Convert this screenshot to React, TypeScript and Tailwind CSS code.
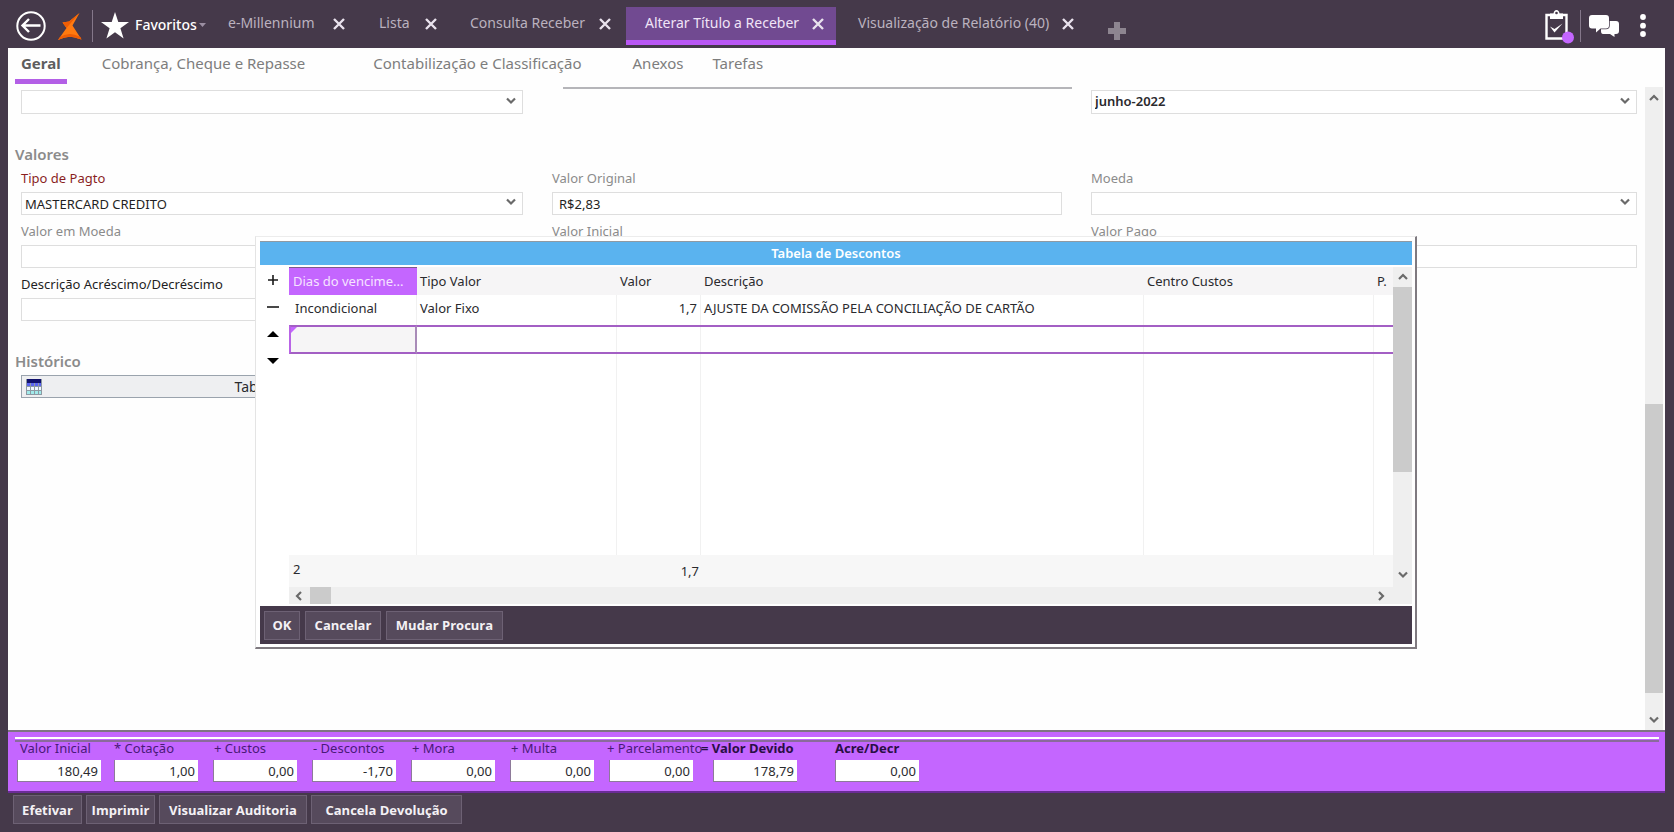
import React from "react";

type Option = { id: string; label: string; value?: string; tone?: string };

function Chevron({ dir = "down" }: { dir?: "down" | "up" | "left" | "right" }) {
  const paths = {
    down: "M2 3.5 6 7.5 10 3.5",
    up: "M2 8 6 4 10 8",
    left: "M8 2 4 6 8 10",
    right: "M4 2 8 6 4 10",
  };
  return (
    <svg viewBox="0 0 12 12" className="size-3" fill="none" stroke="#6a6a6a" strokeWidth="2.2" aria-hidden="true">
      <path d={paths[dir]} />
    </svg>
  );
}

function CloseIcon() {
  return (
    <svg viewBox="0 0 12 12" className="size-3" fill="none" stroke="#e9e2ed" strokeWidth="2.4" aria-hidden="true">
      <path d="M1 1 11 11M11 1 1 11" />
    </svg>
  );
}

function SelectField({ id, label, value, tone = "text-[#8b8b8b]" }: Option) {
  return (
    <div className="flex flex-col">
      <label htmlFor={id} className={`h-[22px] text-[13px] leading-4 ${tone}`}>
        {label}
      </label>
      <div className="relative">
        <select
          id={id}
          defaultValue={value}
          className="block h-[23px] w-full appearance-none border border-[#dedede] bg-white pl-[3px] text-[13px] leading-5 text-[#1f1f24]"
        >
          <option>{value}</option>
        </select>
        <span className="pointer-events-none absolute top-1 right-1.5">
          <Chevron />
        </span>
      </div>
    </div>
  );
}

function TextField({ id, label, value, tone = "text-[#8b8b8b]" }: Option) {
  return (
    <div className="flex flex-col">
      <label htmlFor={id} className={`h-[22px] text-[13px] leading-4 ${tone}`}>
        {label}
      </label>
      <input
        id={id}
        defaultValue={value}
        className="h-[23px] w-full border border-[#dedede] bg-white px-1.5 text-[13px] leading-5 text-[#1f1f24]"
      />
    </div>
  );
}

const windowTabs = [
  { label: "e-Millennium", box: "w-[150px] pr-4 pl-[17px]" },
  { label: "Lista", box: "w-[92px] pr-4 pl-[18px]" },
  { label: "Consulta Receber", box: "w-[173px] pr-[15px] pl-[17px]" },
  { label: "Alterar Título a Receber", box: "w-[210px] pr-3 pl-[19px]", active: true },
  { label: "Visualização de Relatório (40)", box: "w-[250px] pr-3 pl-[22px]" },
];

function Header() {
  return (
    <header className="flex h-12 items-start bg-[#45394a] pl-4 text-white">
      <button aria-label="Voltar" className="mt-[11px]">
        <svg viewBox="0 0 30 30" className="size-[30px]" fill="none" stroke="#fff" strokeWidth="2">
          <circle cx="15" cy="15" r="13.7" />
          <path d="M24.500 14.500H6.500M13 8 6.500 14.500 13 21" strokeWidth="2.400" />
        </svg>
      </button>
      <svg viewBox="0 0 24 28" className="mt-[13px] ml-3 h-7 w-6" aria-hidden="true">
        <path d="M21.500 0 14.500 12.500 23.500 26.500Q16 24 11.500 23.700 6 24 0 27L8.500 15 4.500 9.500 11 8.500Z" fill="#ff7a0f" />
        <path d="M8.500 15 4.500 9.500 11 8.500 21.500 0Z" fill="#ee5d05" />
        <path d="M0 27Q6 24 11.500 23.700 16 24 23.500 26.500L22.500 24Q16 21 11.500 21 6 21.500 2 24Z" fill="#ee5d05" />
      </svg>
      <span className="mt-2.5 ml-2.5 h-8 w-px bg-[#84778a]" />
      <button className="mt-[11px] ml-2 flex h-7 w-[104px] items-center text-[14px] font-medium">
        <svg viewBox="0 0 28 27" className="h-[27px] w-7 shrink-0" aria-hidden="true">
          <path d="M14 0 17.300 10H28L19.400 16.200 22.600 26.500 14 20.200 5.400 26.500 8.600 16.200 0 10H10.700Z" fill="#fff" />
        </svg>
        <span className="ml-1.5 leading-5">Favoritos</span>
        <svg viewBox="0 0 8 4" className="ml-0.5 h-1 w-2 shrink-0" aria-hidden="true">
          <path d="M0 0H7L3.500 4Z" fill="#9b8fa2" />
        </svg>
      </button>
      <nav className="ml-1.5 flex pt-[7px]" aria-label="Janelas">
        {windowTabs.map((t) => (
          <div
            key={t.label}
            className={`flex h-[38px] items-start justify-between text-[14px] leading-5 ${t.box} ${
              t.active ? "border-b-[5px] border-[#b957f5] bg-[#714a91] text-[#f0e4f7]" : "text-[#bbb2bf]"
            }`}
          >
            <a href="#" className="mt-1.5 whitespace-nowrap">
              {t.label}
            </a>
            <button aria-label={`Fechar ${t.label}`} className="mt-[11px]">
              <CloseIcon />
            </button>
          </div>
        ))}
      </nav>
      <button aria-label="Adicionar" className="mt-[22px] ml-[22px]">
        <svg viewBox="0 0 18 18" className="size-[18px]" aria-hidden="true">
          <path d="M6 0H12V6H18V12H12V18H6V12H0V6H6Z" fill="#8d8590" />
        </svg>
      </button>
      <div className="ml-auto flex items-start pr-7">
        <button aria-label="Tarefas pendentes" className="mt-2.5">
          <svg viewBox="0 0 30 34" className="h-[34px] w-[30px]">
            <path d="M1.500 5H21.500V28.500H1.500Z" fill="none" stroke="#fff" strokeWidth="2.400" />
            <path d="M5 9V3.500H8.500Q9 0 11.500 0T14.500 3.500H18V9Z" fill="#fff" />
            <circle cx="11.500" cy="3" r="1.300" fill="#45394a" />
            <path d="M5 16.500 9.500 22.500 17.500 13.500 9.500 19Z" fill="#fff" />
            <circle cx="23" cy="27.500" r="6" fill="#c466ff" />
          </svg>
        </button>
        <span className="mt-2.5 ml-[5px] h-8 w-px bg-[#84778a]" />
        <button aria-label="Conversas" className="mt-[15px] ml-2">
          <svg viewBox="0 0 31 22" className="h-[22px] w-[31px]">
            <path d="M14 6H27Q30 6 30 9V16Q30 19 27 19H25.500V22L21 19H14Q12 19 12 16V8Z" fill="#fff" />
            <path
              d="M3 0H17Q20 0 20 3V10.500Q20 13.500 17 13.500H11.500L7 17.500V13.500H3Q0 13.500 0 10.500V3Q0 0 3 0Z"
              fill="#fff"
              stroke="#45394a"
              strokeWidth="1.500"
              paintOrder="stroke"
            />
          </svg>
        </button>
        <button aria-label="Mais opções" className="mt-[14px] ml-5">
          <svg viewBox="0 0 6 24" className="h-6 w-1.5" fill="#fff">
            <circle cx="3" cy="3" r="2.900" />
            <circle cx="3" cy="11.700" r="2.900" />
            <circle cx="3" cy="20" r="2.900" />
          </svg>
        </button>
      </div>
    </header>
  );
}

const sections = [
  { label: "Cobrança, Cheque e Repasse", gap: "ml-[35px]" },
  { label: "Contabilização e Classificação", gap: "ml-[68px]" },
  { label: "Anexos", gap: "ml-[51px]" },
  { label: "Tarefas", gap: "ml-[29px]" },
];

function SectionNav() {
  return (
    <nav className="flex h-9 items-start pl-[7px] text-[15px] text-[#7d7d7d]" aria-label="Seções">
      <a href="#" className="h-9 border-b-[5px] border-[#b35fe6] px-1.5 leading-[30px] font-bold text-[#5e5e5e]">
        Geral
      </a>
      {sections.map((s) => (
        <a key={s.label} href="#" className={`leading-[30px] whitespace-nowrap ${s.gap}`}>
          {s.label}
        </a>
      ))}
    </nav>
  );
}

const columns = ["Dias do vencime...", "Tipo Valor", "Valor", "Descrição", "Centro Custos", "P."];
const cellLine = "border-r border-[#f1f1f1]";

function DiscountTable() {
  return (
    <table className="w-full table-fixed border-separate border-spacing-0 text-[13px] leading-4 text-[#2a2a2e]">
      <colgroup>
        <col className="w-[128px]" />
        <col className="w-[200px]" />
        <col className="w-[84px]" />
        <col />
        <col className="w-[230px]" />
        <col className="w-[19px]" />
      </colgroup>
      <thead>
        <tr className="h-7 bg-[#f6f5f6] text-left">
          {columns.map((c, i) => (
            <th
              key={c}
              scope="col"
              className={`font-normal whitespace-nowrap ${
                i === 0
                  ? "border-y border-t-[#7b5a8c] border-b-[#c466ff] bg-[#c466ff] px-1 text-[#f6e4ff]"
                  : "px-[3px]"
              }`}
            >
              {c}
            </th>
          ))}
        </tr>
      </thead>
      <tbody>
        <tr className="h-[30px] align-top">
          <td className={`pt-[5px] pl-1.5 ${cellLine}`}>Incondicional</td>
          <td className={`pt-[5px] pl-[3px] ${cellLine}`}>Valor Fixo</td>
          <td className={`pt-[5px] pr-[3px] text-right ${cellLine}`}>1,7</td>
          <td className={`pt-[5px] pl-[3px] whitespace-nowrap ${cellLine}`}>
            AJUSTE DA COMISSÃO PELA CONCILIAÇÃO DE CARTÃO
          </td>
          <td className={cellLine} />
          <td />
        </tr>
        <tr className="h-[29px]">
          <td className="relative border-2 border-y-[#a35fc4] border-r-[#a98bb8] border-l-[#b964e6] bg-[#f6f5f6] p-0">
            <svg viewBox="0 0 6 6" className="absolute top-0 left-0 size-1.5" aria-hidden="true">
              <path d="M0 0H6L0 6Z" fill="#c466ff" />
            </svg>
          </td>
          {[0, 1, 2, 3, 4].map((i) => (
            <td key={i} className="border-y-2 border-[#a35fc4] p-0">
              <div className={`h-[25px] ${i < 4 ? cellLine : ""}`} />
            </td>
          ))}
        </tr>
        <tr className="h-[201px]">
          {[0, 1, 2, 3, 4].map((i) => (
            <td key={i} className={cellLine} />
          ))}
          <td />
        </tr>
      </tbody>
      <tfoot>
        <tr className="h-8 bg-[#f7f7f7]">
          <td className="pb-1 pl-1">2</td>
          <td />
          <td className="pr-0.5 text-right">1,7</td>
          <td colSpan={3} />
        </tr>
      </tfoot>
    </table>
  );
}

const darkButton =
  "border border-[#6d6174] bg-[#564a5c] font-bold text-[#f4f1f5] whitespace-nowrap text-[13px] leading-4 font-['Open_Sans','Noto_Sans',sans-serif]";

function DiscountDialog() {
  return (
    <section
      role="dialog"
      aria-label="Tabela de Descontos"
      className="absolute top-[188px] right-[248px] left-[247px] border-t border-r-2 border-b-2 border-l border-t-[#ececec] border-r-[#7f7a80] border-b-[#7f7a80] border-l-[#e4e4e4] bg-white pt-1 pr-[3px] pb-[3px] pl-1"
    >
      <h2 className="h-6 border-t border-[#8f9aa3] bg-[#5ab3ef] text-center text-[13px] leading-[22px] font-semibold text-white">
        Tabela de Descontos
      </h2>
      <div className="flex pt-0.5 pb-0.5">
        <div className="flex w-[29px] flex-col items-center gap-[11px] pt-[5px] pr-1">
          <button aria-label="Incluir linha" className="flex size-4 items-center justify-center">
            <svg viewBox="0 0 12 12" className="size-3" stroke="#1a1a1a" strokeWidth="1.600">
              <path d="M1 6H11M6 1V11" />
            </svg>
          </button>
          <button aria-label="Excluir linha" className="flex size-4 items-center justify-center">
            <svg viewBox="0 0 12 12" className="size-3" stroke="#1a1a1a" strokeWidth="1.600">
              <path d="M0 6H12" />
            </svg>
          </button>
          <button aria-label="Mover para cima" className="flex size-4 items-center justify-center">
            <svg viewBox="0 0 12 6" className="h-1.5 w-3">
              <path d="M6 0 12 6H0Z" />
            </svg>
          </button>
          <button aria-label="Mover para baixo" className="flex size-4 items-center justify-center">
            <svg viewBox="0 0 12 6" className="h-1.5 w-3">
              <path d="M6 6 12 0H0Z" />
            </svg>
          </button>
        </div>
        <div className="min-w-0 flex-1">
          <div className="flex">
            <div className="min-w-0 flex-1">
              <DiscountTable />
            </div>
            <div className="flex w-[19px] flex-col items-center bg-[#efefef]">
              <div className="flex h-5 items-center">
                <Chevron dir="up" />
              </div>
              <div className="h-[185px] w-full bg-[#cbcbcb]" />
              <div className="mt-auto flex h-6 items-center">
                <Chevron />
              </div>
            </div>
          </div>
          <div className="flex h-[17px] items-center bg-[#efefef] pr-[25px] pl-1">
            <Chevron dir="left" />
            <div className="ml-[5px] h-full w-[21px] bg-[#cbcbcb]" />
            <div className="ml-auto">
              <Chevron dir="right" />
            </div>
          </div>
        </div>
      </div>
      <div className="flex h-[38px] items-center gap-[5px] bg-[#45394a] px-1">
        <button className={`h-[29px] w-9 ${darkButton}`}>OK</button>
        <button className={`h-[29px] w-[76px] ${darkButton}`}>Cancelar</button>
        <button className={`h-[29px] w-[117px] ${darkButton}`}>Mudar Procura</button>
      </div>
    </section>
  );
}

const totals = [
  { id: "inicial", sign: "", label: "Valor Inicial", value: "180,49", box: "w-[97px]", inset: "pl-[3px]" },
  { id: "cotacao", sign: "* ", label: "Cotação", value: "1,00", box: "w-[99px]" },
  { id: "custos", sign: "+ ", label: "Custos", value: "0,00", box: "w-[99px]", inset: "pl-px" },
  { id: "descontos", sign: "- ", label: "Descontos", value: "-1,70", box: "w-[99px]", inset: "pl-px" },
  { id: "mora", sign: "+ ", label: "Mora", value: "0,00", box: "w-[99px]", inset: "pl-px" },
  { id: "multa", sign: "+ ", label: "Multa", value: "0,00", box: "w-[99px]", inset: "pl-px" },
  { id: "parcelamento", sign: "+ ", label: "Parcelamento", value: "0,00", box: "w-[104px]", inset: "-ml-0.5" },
  { id: "devido", sign: "= ", label: "Valor Devido", value: "178,79", box: "w-[122px]", inset: "-ml-3", strong: true },
  { id: "acre", sign: "", label: "Acre/Decr", value: "0,00", box: "w-[84px]", strong: true },
];

function TotalsBar() {
  return (
    <section
      aria-label="Totais"
      className="mr-[9px] ml-2 h-[63px] border-t-2 border-b-2 border-t-[#7f7484] border-b-[#6a2c96] bg-[#c466ff]"
    >
      <div className="mt-[5px] mr-1.5 ml-[7px] h-[5px] border-t-2 border-b-2 border-t-white border-b-[#8a6a9c]" />
      <div className="flex pl-[9px]">
        {totals.map((t) => (
          <div key={t.id} className={`flex flex-col ${t.box}`}>
            <label
              htmlFor={t.id}
              className={`h-[18px] text-[13px] leading-[13px] whitespace-nowrap ${t.inset ?? ""} ${
                t.strong ? "font-bold text-[#2a0f45]" : "text-[#4a1a78]"
              }`}
            >
              {t.sign}
              {t.label}
            </label>
            <input
              id={t.id}
              defaultValue={t.value}
              className="h-[22px] w-[84px] border-b border-l border-[#8d7a99] bg-white pr-[3px] text-right text-[13px] text-[#2a2a2e]"
            />
          </div>
        ))}
      </div>
    </section>
  );
}

function CalendarIcon() {
  return (
    <svg viewBox="0 0 16 16" className="size-4" aria-hidden="true">
      <path d="M0 0H16V16H0Z" fill="#8d99a3" />
      <path d="M1 0H15V4H1Z" fill="#10106b" />
      <path d="M1 4H4V7H1ZM5 4H8V7H5ZM9 4H12V7H9ZM13 4H15V7H13Z" fill="#5a64f0" />
      <path d="M1 8H4V11H1ZM5 8H8V11H5ZM9 8H12V11H9ZM13 8H15V11H13Z" fill="#f2f8ff" />
      <path d="M1 12H4V15H1ZM5 12H8V15H5ZM9 12H12V15H9ZM13 12H15V15H13Z" fill="#a0eaea" />
    </svg>
  );
}

const formGrid = "grid grid-cols-[502fr_510fr_546fr] gap-x-[29px] pl-[13px]";

export default function App() {
  return (
    <div className="flex min-h-screen flex-col bg-[#45394a] font-['Noto_Sans','Open_Sans',sans-serif]">
      <Header />
      <main className="relative mr-[9px] ml-2 flex flex-1 flex-col bg-[#fefefe]">
        <SectionNav />
        <div className="flex flex-1">
          <div className="mt-[3px] min-w-0 flex-1 pr-2">
            <div className={formGrid}>
              <div className="pt-[3px]">
                <div className="relative">
                  <select
                    aria-label="Situação"
                    className="block h-6 w-full appearance-none border border-[#dedede] bg-white"
                  />
                  <span className="pointer-events-none absolute top-[5px] right-1.5">
                    <Chevron />
                  </span>
                </div>
              </div>
              <div className="mr-[-10px] ml-[11px] h-0.5 bg-[#b5b5b9]" />
              <div className="pt-[3px]">
                <div className="relative">
                  <select
                    aria-label="Competência"
                    defaultValue="junho-2022"
                    className="block h-6 w-full appearance-none border border-[#dedede] bg-white pl-[3px] text-[13px] font-semibold text-[#2a2a2e]"
                  >
                    <option>junho-2022</option>
                  </select>
                  <span className="pointer-events-none absolute top-[5px] right-1.5">
                    <Chevron />
                  </span>
                </div>
              </div>
            </div>
            <h3 className="mt-[29px] ml-[7px] text-[15px] leading-[22px] font-semibold text-[#8b8b8b]">Valores</h3>
            <div className={`mt-[5px] gap-y-2 ${formGrid}`}>
              <SelectField id="tipo" label="Tipo de Pagto" value="MASTERCARD CREDITO" tone="text-[#8a1f1f]" />
              <TextField id="original" label="Valor Original" value="R$2,83" />
              <SelectField id="moeda" label="Moeda" value="" />
              <TextField id="valorMoeda" label="Valor em Moeda" />
              <TextField id="valorInicial" label="Valor Inicial" />
              <TextField id="pago" label="Valor Pago" />
              <TextField id="descricao" label="Descrição Acréscimo/Decréscimo" tone="text-[#1f1f24]" />
            </div>
            <h3 className="mt-[29px] ml-[7px] text-[15px] leading-[22px] font-semibold text-[#8b8b8b]">Histórico</h3>
            <div className={`mt-[3px] ${formGrid}`}>
              <button className="flex h-[23px] items-center border border-[#9aa3ad] bg-[#eeeff1] pl-1 text-[14px] leading-5 text-[#2a2a2e]">
                <CalendarIcon />
                <span className="flex-1 pl-5 text-center">Tabela Descontos</span>
              </button>
            </div>
          </div>
          <div className="mt-[3px] mr-0.5 flex w-[18px] flex-col items-center bg-[#efefef]">
            <div className="flex h-[22px] items-center">
              <Chevron dir="up" />
            </div>
            <div className="mt-[295px] h-[289px] w-full bg-[#cbcbcb]" />
            <div className="mt-auto flex h-5 items-center">
              <Chevron />
            </div>
          </div>
        </div>
        <DiscountDialog />
      </main>
      <TotalsBar />
      <footer className="flex h-[39px] items-start gap-1 pt-0.5 pl-[13px]">
        <button className={`h-[29px] w-[69px] ${darkButton}`}>Efetivar</button>
        <button className={`h-[29px] w-[69px] ${darkButton}`}>Imprimir</button>
        <button className={`h-[29px] w-[148px] ${darkButton}`}>Visualizar Auditoria</button>
        <button className={`h-[29px] w-[151px] ${darkButton}`}>Cancela Devolução</button>
      </footer>
    </div>
  );
}
